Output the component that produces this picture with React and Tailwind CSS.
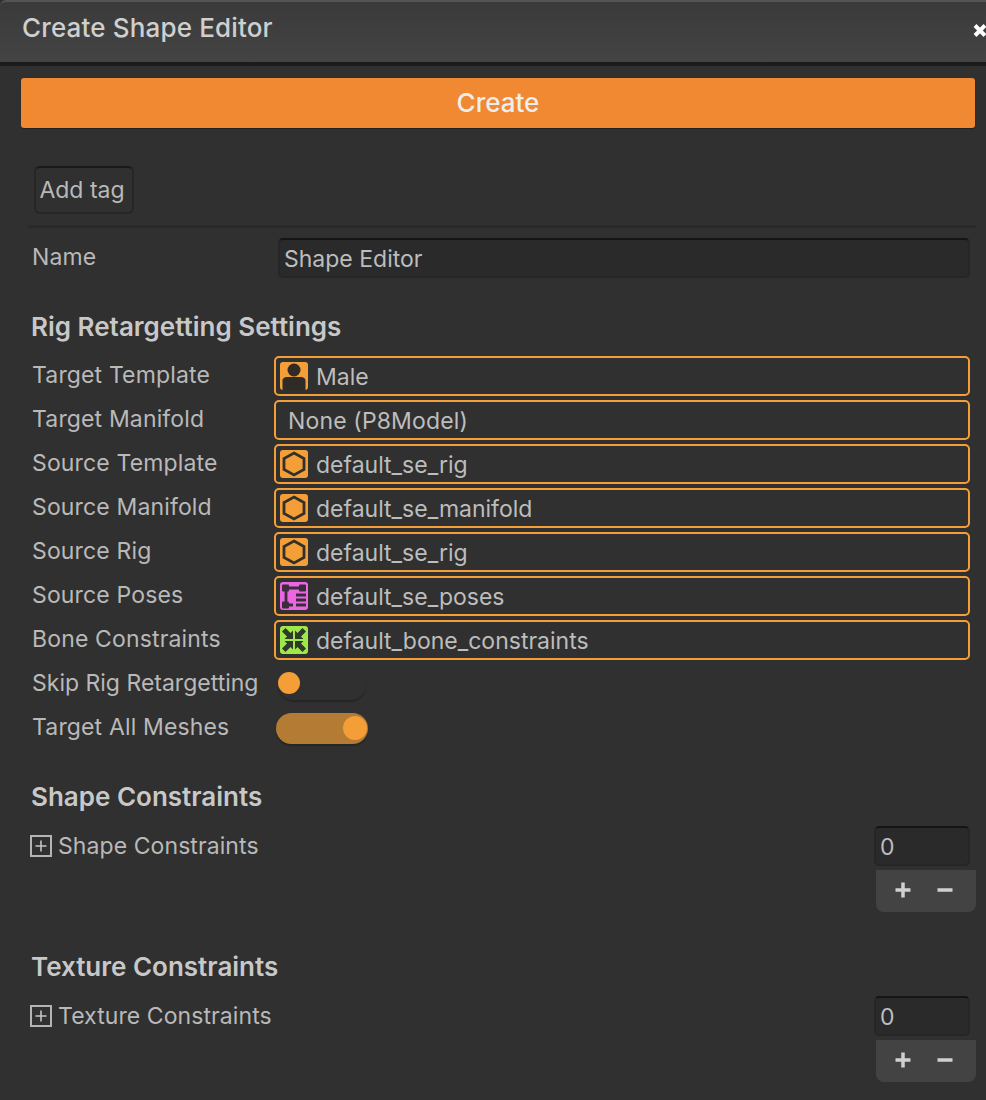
const font = { fontFamily: "Inter, 'Noto Sans', sans-serif" };

function PersonIcon() {
  return (
    <svg viewBox="0 0 28 28" className="w-7 h-7 shrink-0">
      <rect x="0" y="0" width="28" height="28" rx="3" fill="#f39e36" />
      <circle cx="14" cy="8" r="6.5" fill="#2f2c28" />
      <path d="M2.5 28V19C2.5 16 4.5 15 7.5 15H20.5C23.5 15 25.5 16 25.5 19V28Z" fill="#2f2c28" />
    </svg>
  );
}

function HexIcon() {
  return (
    <svg viewBox="0 0 28 28" className="w-7 h-7 shrink-0">
      <rect x="0" y="0" width="28" height="28" rx="3" fill="#f39e36" />
      <path d="M14 3L24 8.5V19.5L14 25L4 19.5V8.5Z" fill="#f39e36" stroke="#33302c" strokeWidth="2.8" />
    </svg>
  );
}

function PoseIcon() {
  return (
    <svg viewBox="0 0 28 28" className="w-7 h-7 shrink-0">
      <rect x="0" y="0" width="28" height="28" rx="3" fill="#ec66e2" />
      <path d="M5 6H23M6 6V23H13" fill="none" stroke="#3a2c3a" strokeWidth="2.8" />
      <rect x="2" y="2.5" width="7" height="7" rx="1" fill="#3a2c3a" />
      <rect x="19" y="2.5" width="7" height="7" rx="1" fill="#3a2c3a" />
      <rect x="2" y="19.5" width="7" height="7" rx="1" fill="#3a2c3a" />
      <path d="M16 13H26M16 18H26M16 23H26" stroke="#3a2c3a" strokeWidth="2.8" />
    </svg>
  );
}

function ConstraintIcon() {
  return (
    <svg viewBox="0 0 28 28" className="w-7 h-7 shrink-0">
      <rect x="0" y="0" width="28" height="28" rx="3" fill="#9fe84a" />
      <g fill="#2f3a28">
        <path d="M2 5.5L5.5 2L10.5 7L13 4.5V13H4.5L7 10.5Z" />
        <path d="M26 5.5L22.5 2L17.5 7L15 4.5V13H23.5L21 10.5Z" />
        <path d="M2 22.5L5.5 26L10.5 21L13 23.5V15H4.5L7 17.5Z" />
        <path d="M26 22.5L22.5 26L17.5 21L15 23.5V15H23.5L21 17.5Z" />
      </g>
    </svg>
  );
}

const fields = [
  { label: "Target Template", value: "Male", icon: <PersonIcon /> },
  { label: "Target Manifold", value: "None (P8Model)" },
  { label: "Source Template", value: "default_se_rig", icon: <HexIcon /> },
  { label: "Source Manifold", value: "default_se_manifold", icon: <HexIcon /> },
  { label: "Source Rig", value: "default_se_rig", icon: <HexIcon /> },
  { label: "Source Poses", value: "default_se_poses", icon: <PoseIcon /> },
  { label: "Bone Constraints", value: "default_bone_constraints", icon: <ConstraintIcon /> },
];

function FieldRow({ label, value, icon }) {
  return (
    <div className="flex items-center h-10 pl-8 pr-4">
      <div className="w-[242px] shrink-0 -mt-0.5 tracking-[0.15px] text-[#b9b9b9]">{label}</div>
      <div className="flex-1 h-10 flex items-center gap-2 rounded-[5px] border-2 border-[#f39e36] pl-1 text-[#bdbdbd]">
        {icon}
        <span className={icon ? "pt-0.5" : "pl-2 pt-0.5 tracking-[0.15px]"}>{value}</span>
      </div>
    </div>
  );
}

function ArrayRow({ title }) {
  return (
    <div className="flex flex-col">
      <div className="pl-[31px] h-8 flex items-center text-[26px] text-[#c8c8c8] font-semibold">{title}</div>
      <div className="flex items-start pl-[30px] pr-4 mt-[13px]">
        <div className="flex items-center gap-1.5 flex-1 h-10 text-[#b9b9b9]">
          <span className="w-[22px] h-[22px] border-2 border-[#b4b4b4] flex items-center justify-center">
            <svg viewBox="0 0 14 14" className="w-3.5 h-3.5">
              <path d="M7 1.5V12.5M1.5 7H12.5" stroke="#c4c4c4" strokeWidth="1.6" />
            </svg>
          </span>
          <span className="tracking-[0.08px]">{title}</span>
        </div>
        <div className="w-24 h-10 rounded-[5px] bg-[#2a2a2a] border-2 border-[#262626] border-t-[#151515] pl-1 pt-0.5 flex items-center text-[#bdbdbd]">
          0
        </div>
      </div>
      <div className="flex justify-end mt-1 mr-[10px]">
        <div className="w-[100px] h-[42px] bg-[#434343] rounded-b-lg flex items-center justify-center gap-6 pb-0.5 pr-1">
          <svg viewBox="0 0 18 18" className="w-[18px] h-[18px]">
            <path d="M9 1.5V16.5M1.5 9H16.5" stroke="#d0d0d0" strokeWidth="3.5" />
          </svg>
          <svg viewBox="0 0 18 18" className="w-[18px] h-[18px]">
            <path d="M1.5 9H16.5" stroke="#d0d0d0" strokeWidth="3.5" />
          </svg>
        </div>
      </div>
    </div>
  );
}

export default function App() {
  return (
    <div className="w-[986px] h-[1100px] overflow-hidden bg-[#303030] text-[23px] leading-none" style={font}>
      <header className="h-[66px] rounded-tl-md flex items-center justify-between pl-[22px] pb-2 bg-gradient-to-b from-[#3a3a3a] to-[#444444] border-t-2 border-t-[#555555] border-b-4 border-b-[#1b1b1b]">
        <h1 className="text-[26px] tracking-[0.15px] font-medium text-[#cfcfcf]">Create Shape Editor</h1>
        <svg viewBox="0 0 14 14" className="w-[14px] h-[15px] shrink-0 mt-1 -mr-px">
          <path d="M2 2L12 12M12 2L2 12" stroke="#ffffff" strokeWidth="4" />
        </svg>
      </header>

      <button className="block ml-[21px] mt-3 w-[954px] h-[50px] rounded-[3px] bg-[#f18832] text-[26px] text-[#eeeeee] font-medium shadow-[0_1px_1px_#222222]">
        Create
      </button>

      <button className="block ml-[34px] mt-[38px] w-[100px] h-12 rounded-md bg-[#303030] border-2 border-[#262626] border-t-[#191919] pr-1 text-[#b9b9b9]">
        Add tag
      </button>

      <div className="ml-7 mr-[10px] mt-[11px] h-[3px] bg-[#292929]" />

      <div className="flex items-center pl-8 pr-4 mt-[10px] h-10">
        <div className="w-[246px] shrink-0 -mt-0.5 tracking-[0.15px] text-[#b9b9b9]">Name</div>
        <div className="flex-1 h-10 rounded-[5px] bg-[#2a2a2a] border-2 border-[#262626] border-t-[#151515] pl-1 pt-0.5 flex items-center text-[#bdbdbd]">
          Shape Editor
        </div>
      </div>

      <h2 className="pl-[31px] mt-[33px] h-8 flex items-center text-[26px] text-[#c8c8c8] font-semibold">Rig Retargetting Settings</h2>

      <div className="flex flex-col gap-1 mt-[13px]">
        {fields.map((f) => (
          <FieldRow key={f.label} {...f} />
        ))}

        <div className="flex items-center h-10 pl-8">
          <div className="w-[246px] shrink-0 -mt-0.5 text-[#b9b9b9]">Skip Rig Retargetting</div>
          <div className="w-[88px] h-[31px] rounded-full flex items-center shadow-[0_2px_1px_#262626]">
            <span className="w-[22px] h-[22px] rounded-full bg-[#f39e36] -mt-[3px]" />
          </div>
        </div>

        <div className="flex items-center h-10 pl-8">
          <div className="w-[244px] shrink-0 -mt-0.5 tracking-[0.15px] text-[#b9b9b9]">Target All Meshes</div>
          <div className="w-[92px] h-[31px] rounded-full bg-[#b47b35] flex items-center justify-end pr-[1px] shadow-[0_2px_1px_#262626]">
            <span className="w-6 h-6 rounded-full bg-[#f39e36]" />
          </div>
        </div>
      </div>

      <div className="mt-[33px]">
        <ArrayRow title="Shape Constraints" />
      </div>
      <div className="mt-[39px]">
        <ArrayRow title="Texture Constraints" />
      </div>
    </div>
  );
}
